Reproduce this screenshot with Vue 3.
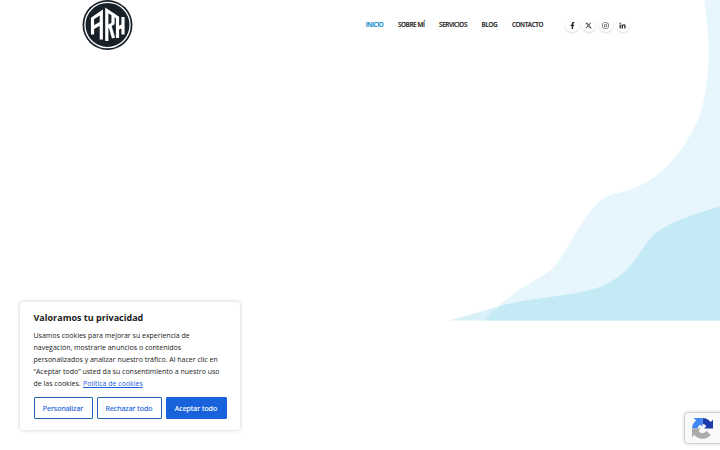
<template>
  <div class="page">
    <svg class="waves" viewBox="0 0 270 321" aria-hidden="true">
      <path
        fill="#e6f6fc"
        d="M254.500 0C255 12 258 24 258.400 42C259 62 258 84 251 111C247 126 234 147 222 161C208 177 190 188 170 192.500C154 194.500 146 204 139 213C129 226 118 248 107 263C101 271 92 276 82 282C65 292 46 306 34 320.500H270V0Z"
      />
      <path
        fill="#c4eaf5"
        d="M34 320.500C39 315 44 310 50 306C83 297 119 297 147 288C163 283 177 271 185 260C193 249 198 239 206 233C220 222 244 214 270 206.500V320.500Z"
      />
      <path fill="#d8f1f9" d="M0 320.500L50 306C44 310 39 315 34 320.500Z" />
    </svg>

    <header class="header">
      <a class="logo" href="#" aria-label="ARM">
        <svg viewBox="0 0 50 50">
          <circle cx="25" cy="25" r="25" fill="#182028" />
          <circle cx="25" cy="25" r="22.600" fill="none" stroke="#fff" stroke-width="1.300" />
          <g fill="none" stroke="#fff" stroke-width="3.200">
            <path d="M10 34.500V18.500L18.800 12.500V39.500M10 28L18.800 23" />
            <path d="M24.300 41V10.500L30.500 14.500V23.500L24.300 27.500M27.500 26L31 38" />
            <path d="M30.500 14.500L35 17.500V38M40.500 17V34.500M35 28.500L40.500 25.500" />
          </g>
        </svg>
      </a>
      <nav class="nav">
        <a
          v-for="item in navItems"
          :key="item"
          href="#"
          :class="{ active: item === 'INICIO' }"
        >{{ item }}</a>
      </nav>
      <div class="socials">
        <a v-for="icon in socials" :key="icon.name" href="#" :aria-label="icon.name">
          <svg :viewBox="icon.box"><path :d="icon.path" /></svg>
        </a>
      </div>
    </header>

    <section class="cookie-box">
      <h2>Valoramos tu privacidad</h2>
      <p>
        Usamos cookies para mejorar su experiencia de<br />
        navegación, mostrarle anuncios o contenidos<br />
        personalizados y analizar nuestro tráfico. Al hacer clic en<br />
        “Aceptar todo” usted da su consentimiento a nuestro uso<br />
        de las cookies. <a href="#">Política de cookies</a>
      </p>
      <div class="cookie-actions">
        <button class="btn customize">Personalizar</button>
        <button class="btn reject">Rechazar todo</button>
        <button class="btn accept">Aceptar todo</button>
      </div>
    </section>

    <div class="recaptcha">
      <svg viewBox="0 0 64 64">
        <path fill="#1c3aa9" d="M64 32V5l-7.500 7.500A32 32 0 0 0 32 0v18c5 0 9 2 11.500 7.500L37 32Z" />
        <path fill="#4285f4" d="M32 0H5l7.500 7.500A32 32 0 0 0 0 32h18c0-5 2-9 7.500-11.500L32 27Z" />
        <path fill="#ababab" d="M0 32v27l7.500-7.500A32 32 0 0 0 57 52L44 39c-3 5-7 7-12 7-6 0-9-3-11.500-7.500L27 32Z" />
      </svg>
    </div>
  </div>
</template>

<script setup>
const navItems = ['INICIO', 'SOBRE MÍ', 'SERVICIOS', 'BLOG', 'CONTACTO']

const socials = [
  {
    name: 'Facebook',
    box: '-96 0 512 512',
    path: 'M279 288l14-93h-89v-60c0-25 12-50 52-50h41V7s-37-7-72-7c-73 0-121 44-121 125v70H23v93h81v224h100V288z'
  },
  {
    name: 'X',
    box: '0 0 512 512',
    path: 'M389 48h71L306 224l181 240H345L234 319 107 464H36l165-188L27 48h146l100 133zm-25 374h39L151 88h-42z'
  },
  {
    name: 'Instagram',
    box: '-32 0 512 512',
    path: 'M224 141a115 115 0 1 0 0 230 115 115 0 0 0 0-230zm0 190a75 75 0 1 1 0-150 75 75 0 0 1 0 150zM343 109a27 27 0 1 0 0 54 27 27 0 0 0 0-54zM132 32C64 32 0 96 0 164v184c0 68 64 132 132 132h184c68 0 132-64 132-132V164c0-68-64-132-132-132zm0 40h184c50 0 92 42 92 92v184c0 50-42 92-92 92H132c-50 0-92-42-92-92V164c0-50 42-92 92-92z'
  },
  {
    name: 'LinkedIn',
    box: '-32 0 512 512',
    path: 'M100 480H7V181h93zM54 140a54 54 0 1 1 0-108 54 54 0 0 1 0 108zM448 480h-93V334c0-34 0-79-48-79s-56 38-56 77v148h-93V181h89v41h1c13-24 43-49 88-49 94 0 112 62 112 143z'
  }
]
</script>

<style>
body {
  margin: 0;
  background: #fff;
}
</style>

<style scoped>
.page {
  position: relative;
  height: 450px;
  overflow: hidden;
  font-family: "Open Sans", "Noto Sans", sans-serif;
  color: #212121;
}
a {
  color: inherit;
  text-decoration: none;
}

/* fondo */
.waves {
  position: absolute;
  top: 0;
  right: 0;
  width: 270px;
  height: 321px;
}

/* cabecera */
.header {
  position: relative;
  display: flex;
  align-items: center;
  height: 50px;
  padding: 0 90.5px 0 82px;
}
.logo {
  width: 51px;
  height: 50px;
}
.logo svg {
  display: block;
  width: 51px;
  height: 50px;
}
.nav {
  display: flex;
  gap: 14.6px;
  margin-left: auto;
  font-size: 6.3px;
  font-weight: 600;
  line-height: 10px;
  letter-spacing: -0.36px;
  white-space: nowrap;
  -webkit-text-stroke: 0.15px currentColor;
}
.nav .active {
  color: #0088cc;
}
.socials {
  display: flex;
  gap: 2.8px;
  margin-left: 22px;
}
.socials a {
  display: flex;
  align-items: center;
  justify-content: center;
  width: 14px;
  height: 14px;
  border-radius: 50%;
  background: #fff;
  box-shadow: 0 1px 2px rgba(0, 0, 0, 0.15);
}
.socials svg {
  width: 7px;
  height: 7px;
  fill: #212529;
}

/* aviso de cookies */
.cookie-box {
  position: absolute;
  left: 20px;
  top: 302px;
  box-sizing: border-box;
  width: 220px;
  height: 128px;
  padding: 10px 13.5px;
  background: #fff;
  border-radius: 3px;
  box-shadow: 0 0 4px rgba(0, 0, 0, 0.2);
}
.cookie-box h2 {
  margin: 0;
  font-size: 9px;
  font-weight: 700;
  line-height: 12px;
  white-space: nowrap;
}
.cookie-box p {
  margin: 6px 0 7.4px;
  font-size: 7px;
  line-height: 12px;
  white-space: nowrap;
}
.cookie-box p a {
  margin-left: 0.5px;
  color: #1863dc;
  text-decoration: underline;
}
.cookie-actions {
  display: flex;
  gap: 4px;
}
.btn {
  box-sizing: border-box;
  height: 22px;
  padding: 2px 0 0;
  border: 1px solid #2864b4;
  border-radius: 1px;
  background: #fff;
  color: #1863dc;
  font-family: inherit;
  font-size: 7px;
  font-weight: 500;
  line-height: 10px;
  white-space: nowrap;
  -webkit-text-stroke: 0.15px currentColor;
}
.customize {
  width: 59px;
}
.reject {
  width: 65px;
}
.accept {
  width: 61px;
  background: #1863dc;
  border-color: #1863dc;
  color: #fff;
}

/* insignia reCAPTCHA */
.recaptcha {
  position: absolute;
  left: 685px;
  top: 413px;
  width: 128px;
  height: 30px;
  border-radius: 2px;
  background: #f9f9f9;
  box-shadow: 0 0 3px rgba(0, 0, 0, 0.5);
}
.recaptcha svg {
  display: block;
  width: 21px;
  height: 21px;
  margin: 5px 0 0 7px;
}
</style>
